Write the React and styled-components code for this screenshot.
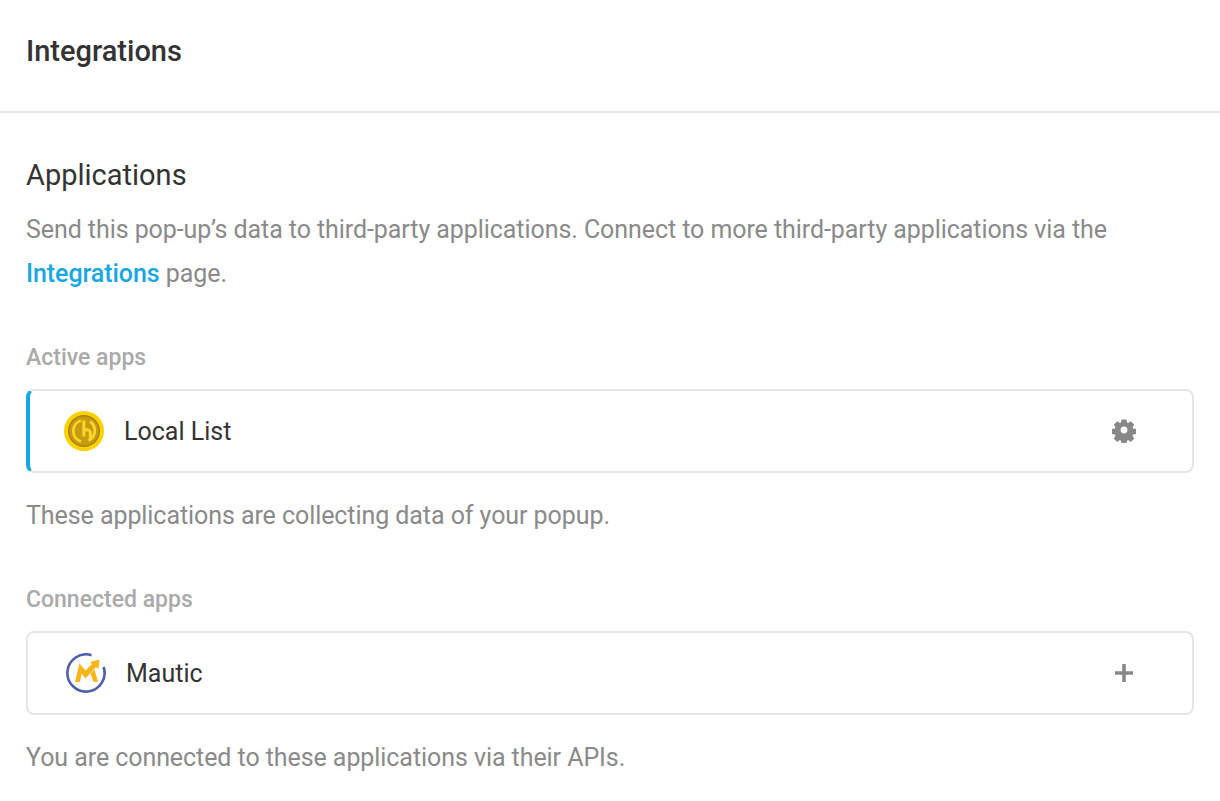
import React from "react";
import styled, { createGlobalStyle } from "styled-components";

const GlobalStyle = createGlobalStyle`
  html, body {
    margin: 0;
    padding: 0;
    background: #fff;
    font-family: Roboto, "Liberation Sans", sans-serif;
    overflow: hidden;
  }
`;

const Page = styled.div`
  width: 1220px;
  height: 801px;
  overflow: hidden;
`;

const Header = styled.header`
  box-sizing: border-box;
  height: 113px;
  padding: 33px 26px 0;
  border-bottom: 2px solid #e6e6e6;
`;

const Title = styled.h1`
  margin: 0;
  font-size: 29px;
  line-height: 36px;
  font-weight: 500;
  color: #333;
`;

const Content = styled.section`
  padding: 44px 26px 0;
`;

const SectionTitle = styled.h2`
  margin: 0;
  font-size: 29px;
  line-height: 37px;
  font-weight: 400;
  color: #333;
`;

const Text = styled.p`
  margin: ${(p) => p.$margin || "0"};
  font-size: 25px;
  line-height: 44px;
  letter-spacing: -0.07px;
  color: #8a8a8a;
`;

const Link = styled.a`
  color: #17a8e3;
  font-weight: 500;
`;

const GroupLabel = styled.h3`
  margin: ${(p) => p.$margin};
  font-size: 23px;
  line-height: 30px;
  font-weight: 500;
  color: #aaa;
`;

const AppRow = styled.div`
  display: flex;
  align-items: center;
  height: 84px;
  box-sizing: border-box;
  margin-top: 16px;
  padding: 0 56px 0 ${(p) => (p.$active ? "34px" : "38px")};
  border: 2px solid #e6e6e6;
  border-left: ${(p) => (p.$active ? "4px solid #17a8e3" : "2px solid #e6e6e6")};
  border-radius: 8px;
`;

const AppLogo = styled.svg`
  width: 40px;
  height: 40px;
  flex: none;
`;

const AppName = styled.span`
  flex: 1;
  margin-left: 20px;
  font-size: 25px;
  color: #333;
`;

const ActionIcon = styled.svg`
  width: 24px;
  height: 24px;
  flex: none;
  fill: #888;
`;

const LocalListLogo = () => (
  <AppLogo viewBox="0 0 40 40">
    <circle cx="20" cy="20" r="20" fill="#fdd000" />
    <circle cx="20" cy="20" r="16" fill="#a9820f" />
    <circle cx="20" cy="20" r="14.5" fill="#c79a10" />
    <path
      d="M17 9.500a11 11 0 0 0 0 21M24.500 29.500a11 11 0 0 0 1.500-19"
      fill="none"
      stroke="#fbd62a"
      strokeWidth="2.8"
    />
    <path
      d="M19.800 9.500v16M19.800 20a3.800 3.800 0 0 1 6.500 1.500v5.500"
      fill="none"
      stroke="#fbd62a"
      strokeWidth="3"
    />
  </AppLogo>
);

const MauticLogo = () => (
  <AppLogo viewBox="0 0 40 40">
    <path
      d="M25.500 2.200A18.600 18.600 0 1 0 37.600 14"
      fill="none"
      stroke="#4e5ea8"
      strokeWidth="2.6"
    />
    <path
      d="M9 29l4.500-18.500 6 7 6.500-6.500-2-2 9.500-2.500-1 9.500-2.500-2-10.500 11.500-4-5-1.500 8.500z"
      fill="#fbb516"
    />
    <path d="M24.500 20.500l4-4L32 29h-4.500z" fill="#fbb516" />
  </AppLogo>
);

const GearIcon = () => (
  <ActionIcon viewBox="0 1 24 24">
    <path
      fillRule="evenodd"
      d="M9.500 1.500h5l.5 3 1.300.6 2.500-1.800 3.500 3.500-1.800 2.500.6 1.300 3 .5v5l-3 .5-.6 1.300 1.800 2.500-3.500 3.500-2.500-1.800-1.300.6-.5 3h-5l-.5-3-1.300-.6-2.500 1.800-3.500-3.500 1.800-2.500-.6-1.300-3-.5v-5l3-.5.6-1.300-1.800-2.500 3.500-3.500 2.500 1.800 1.300-.6zM12 8.600a3.400 3.400 0 1 0 0 6.800 3.400 3.400 0 0 0 0-6.800z"
    />
  </ActionIcon>
);

const PlusIcon = () => (
  <ActionIcon viewBox="0 0 24 24">
    <path d="M10.200 3h3.600v7.200H21v3.600h-7.200V21h-3.600v-7.200H3v-3.600h7.200z" />
  </ActionIcon>
);

export default function App() {
  return (
    <Page>
      <GlobalStyle />
      <Header>
        <Title>Integrations</Title>
      </Header>
      <Content>
        <SectionTitle>Applications</SectionTitle>
        <Text $margin="14px 0 0">
          Send this pop-up’s data to third-party applications. Connect to more third-party
          applications via the <Link>Integrations</Link> page.
        </Text>
        <GroupLabel $margin="47px 0 0">Active apps</GroupLabel>
        <AppRow $active>
          <LocalListLogo />
          <AppName>Local List</AppName>
          <GearIcon />
        </AppRow>
        <Text $margin="21px 0 0">These applications are collecting data of your popup.</Text>
        <GroupLabel $margin="47px 0 0">Connected apps</GroupLabel>
        <AppRow>
          <MauticLogo />
          <AppName>Mautic</AppName>
          <PlusIcon />
        </AppRow>
        <Text $margin="21px 0 0">You are connected to these applications via their APIs.</Text>
      </Content>
    </Page>
  );
}
